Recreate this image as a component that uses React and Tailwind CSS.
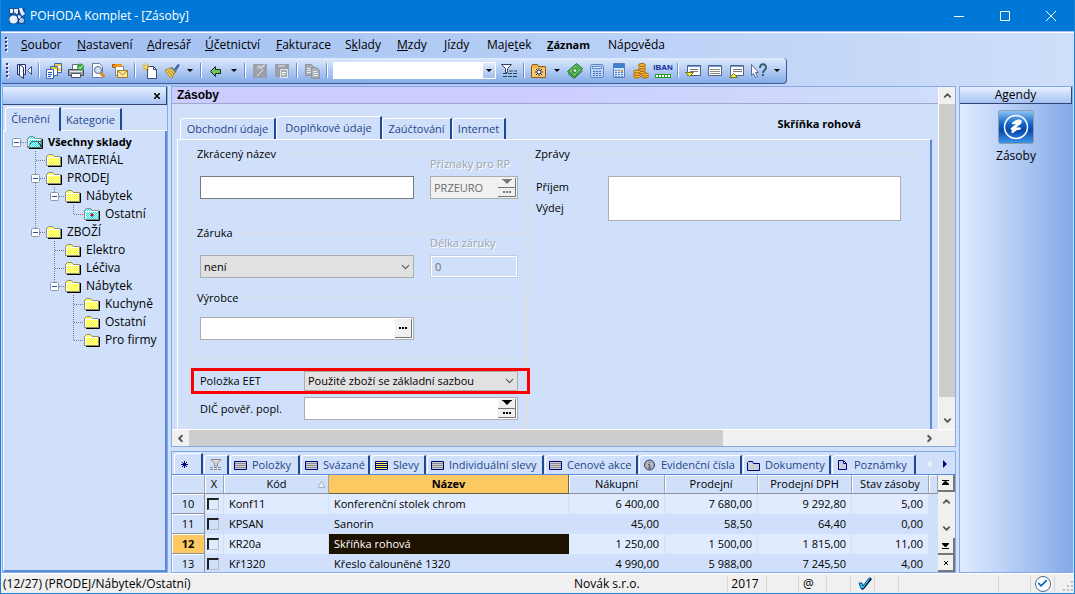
import clsx from 'clsx';
import { Check, ChevronDown, ChevronLeft, ChevronRight, ChevronUp } from 'lucide-react';

// accel is the index of the underlined accelerator letter
const menuItems = [
  { label: 'Soubor', accel: 0, width: 'w-14' },
  { label: 'Nastavení', accel: 0, width: 'w-[70px]' },
  { label: 'Adresář', accel: 0, width: 'w-[58px]' },
  { label: 'Účetnictví', accel: 0, width: 'w-[71px]' },
  { label: 'Fakturace', accel: 0, width: 'w-[69px]' },
  { label: 'Sklady', accel: 1, width: 'w-[52px]' },
  { label: 'Mzdy', accel: 0, width: 'w-[47px]' },
  { label: 'Jízdy', accel: 0, width: 'w-[43px]' },
  { label: 'Majetek', accel: 4, width: 'w-[60px]' },
  { label: 'Záznam', accel: 0, width: 'w-[61px]', bold: true },
  { label: 'Nápověda', accel: 3, width: 'w-[70px]' },
];

// guides: one entry for each tree column
const treeRows = [
  { label: 'Všechny sklady', guides: ['root'], icon: 'open', bold: true },
  { label: 'MATERIÁL', guides: ['none', 'tee'] },
  { label: 'PRODEJ', guides: ['none', 'teeBox'] },
  { label: 'Nábytek', guides: ['none', 'line', 'endBox'] },
  { label: 'Ostatní', guides: ['none', 'line', 'none', 'end'], icon: 'current' },
  { label: 'ZBOŽÍ', guides: ['none', 'endBox'] },
  { label: 'Elektro', guides: ['none', 'none', 'tee'] },
  { label: 'Léčiva', guides: ['none', 'none', 'tee'] },
  { label: 'Nábytek', guides: ['none', 'none', 'endBox'] },
  { label: 'Kuchyně', guides: ['none', 'none', 'none', 'tee'] },
  { label: 'Ostatní', guides: ['none', 'none', 'none', 'tee'] },
  { label: 'Pro firmy', guides: ['none', 'none', 'none', 'end'] },
];

const gridTabs = [
  { label: 'Položky', icon: 'list', width: 'w-[70px]' },
  { label: 'Svázané', icon: 'list', width: 'w-[69px]' },
  { label: 'Slevy', icon: 'listYellow', width: 'w-[55px]' },
  { label: 'Individuální slevy', icon: 'list', width: 'w-[117px]' },
  { label: 'Cenové akce', icon: 'list', width: 'w-[93px]' },
  { label: 'Evidenční čísla', icon: 'info', width: 'w-[103px]' },
  { label: 'Dokumenty', icon: 'folder', width: 'w-[88px]' },
  { label: 'Poznámky', icon: 'page', width: 'w-[84px]' },
];

const stock = [
  { no: 10, code: 'Konf11', name: 'Konferenční stolek chrom', buy: '6 400,00', sell: '7 680,00', vat: '9 292,80', qty: '5,00' },
  { no: 11, code: 'KPSAN', name: 'Sanorin', buy: '45,00', sell: '58,50', vat: '64,40', qty: '0,00' },
  { no: 12, code: 'KR20a', name: 'Skříňka rohová', buy: '1 250,00', sell: '1 500,00', vat: '1 815,00', qty: '11,00', selected: true },
  { no: 13, code: 'Kř1320', name: 'Křeslo čalouněné 1320', buy: '4 990,00', sell: '5 988,00', vat: '7 245,50', qty: '4,00' },
];

const toolIcons = {
  door: (
    <>
      <path d="M1.500 1.500h8v10h-8z" fill="#eef3ff" stroke="#22306e" />
      <path d="M3.500 1.500l4 3v11l-4-3z" fill="#fff" stroke="#22306e" />
      <path d="M15.500 3.500v8l-4-4z" fill="#fff" stroke="#3b5587" />
    </>
  ),
  windows: (
    <>
      <path d="M8.500.5h7v9h-7z" fill="#fff" stroke="#3566b8" />
      <path d="M9 1h6v2H9zM12 5h3v3h-3z" fill="#f4cf38" />
      <path d="M4.500 3.500h7v9h-7z" fill="#fffbe0" stroke="#3566b8" />
      <path d="M5 4h6v2H5z" fill="#f0c52c" />
      <path d="M.5 6.500h7v9h-7z" fill="#fff" stroke="#3566b8" />
      <path d="M2 9.500h4M2 11.500h4M2 13.500h3" stroke="#1d4fae" />
    </>
  ),
  printer: (
    <>
      <path d="M4.500 1.500h7v5h-7z" fill="#fff" stroke="#667" />
      <path d="M.5 6.500h15v6H.5z" fill="#9fa2a8" stroke="#4c4f58" />
      <path d="M2 8.500h12" stroke="#e6e8ec" />
      <path d="M3.500 10.500h9v4h-9z" fill="#fff" stroke="#556" />
      <circle cx="12.500" cy="4" r="3.500" fill="#3da648" />
      <path d="M10.500 4L12 5.500 14.500 2.500" fill="none" stroke="#fff" />
    </>
  ),
  preview: (
    <>
      <path d="M2.500.5h7l3 3v11h-10z" fill="#fff" stroke="#6d7fa4" />
      <circle cx="8" cy="7" r="3.500" fill="#cfe4fa" stroke="#53688f" />
      <path d="M10.500 10l4 4" stroke="#d78c1c" strokeWidth="3" />
    </>
  ),
  mail: (
    <>
      <path d="M.5 1.500h8v3h-8z" fill="#f0941f" stroke="#a75d0a" />
      <path d="M3.500 3.500h8v9h-8z" fill="#fff" stroke="#6d7fa4" />
      <path d="M3 1h7v3H3z" fill="#f0941f" />
      <path d="M5.500 7.500h10v7h-10z" fill="#fbe9a4" stroke="#a27b1c" />
      <path d="M5.500 7.500l5 4.500 5-4.500" fill="none" stroke="#a27b1c" />
    </>
  ),
  newRecord: (
    <>
      <path d="M5.500 3.500h6l3 3v9h-9z" fill="#fff" stroke="#3c4880" />
      <path d="M11.500 3.500v3h3" fill="none" stroke="#3c4880" />
      <path d="M4 0v8M0 4h8M1 1l6 6M7 1L1 7" stroke="#f0a800" />
      <path d="M3 3h2v2H3z" fill="#ffe76a" />
    </>
  ),
  brush: (
    <>
      <path d="M10 6l4-5 2 1-4 6z" fill="#3b62a8" />
      <path d="M8 4l5 5-2 1-5-5z" fill="#5f7699" />
      <path d="M1 7l6-2 4 4-3 6c-2 0-5-4-7-8z" fill="#e9c95a" stroke="#a8862c" />
      <path d="M4 8l4 5M6 7l4 4" stroke="#a8862c" />
    </>
  ),
  back: <path d="M2.500 8.500l5-5v3h5v4h-5v3z" fill="#74c45c" stroke="#152f24" />,
  save: (
    <>
      <path d="M1 1h14v14H1z" fill="#9a9fa9" />
      <path d="M4 2h8v5H4z" fill="#a8acb5" />
      <path d="M6 3l2 2 5-3" fill="none" stroke="#eef1f6" />
      <path d="M5 13l6-6" stroke="#e4e8ef" />
    </>
  ),
  saveAll: (
    <>
      <path d="M1 1h14v13H1z" fill="#9a9fa9" />
      <path d="M4 2h7v2H4z" fill="#c3c7ce" />
      <path d="M6.500 6.500h7v8h-7z" fill="#a7abb4" stroke="#dfe3ea" />
      <path d="M8 9.500h4M8 11.500h3" stroke="#fff" />
    </>
  ),
  copy: (
    <>
      <path d="M1.500 1.500h6l2 2v9h-8z" fill="#a9adb6" stroke="#8d929c" />
      <path d="M3 5.500h4M3 7.500h4M3 9.500h4" stroke="#e8ebf1" />
      <path d="M7.500 4.500h5l3 3v8h-8z" fill="#a9adb6" stroke="#8d929c" />
      <path d="M9 8.500h4M9 10.500h5M9 12.500h5" stroke="#e8ebf1" />
    </>
  ),
  filter: (
    <>
      <path d="M.5 1.500h10l-4 4v4h-2v-4z" fill="#fff" stroke="#35406a" />
      <path d="M2 10.500h14M2 13.500h14" stroke="#1d4a52" strokeDasharray="4 1" />
      <path d="M8 8h8" stroke="#1d4a52" strokeDasharray="4 1" />
    </>
  ),
  folderStar: (
    <>
      <path d="M.5 3.500l1-2h5l1 2h7v11H.5z" fill="#f1b24a" stroke="#8f5f14" />
      <path d="M1 5h13v9H1z" fill="#f7c96c" />
      <path d="M8 5v8M4 9h8M5 6l6 6M11 6l-6 6" stroke="#1c2a78" />
      <path d="M7 8h2v2H7z" fill="#fff" />
    </>
  ),
  money: (
    <>
      <path d="M.5 8.500l9-8 6 5-8 9z" fill="#4faf4c" stroke="#217a2b" />
      <path d="M1 10.500l6 5 9-8" fill="none" stroke="#217a2b" />
      <path d="M3 8.500l6-5.500M7 12l6-6" stroke="#8ad482" />
      <circle cx="8" cy="7.500" r="2" fill="#d9f2cf" stroke="#217a2b" />
    </>
  ),
  calcWide: (
    <>
      <rect x="1.500" y="1.500" width="13" height="13" rx="2" fill="#b9d2f6" stroke="#5c84c6" />
      <path d="M3.500 3.500h9v2h-9z" fill="#eaf3ff" stroke="#5c84c6" />
      <path d="M4 8.500h9M4 10.500h9M4 12.500h9" stroke="#406fbd" strokeDasharray="2 1" />
    </>
  ),
  calc: (
    <>
      <path d="M2.500.5h11v14h-11z" fill="#d3e4fa" stroke="#5a80bd" />
      <path d="M3 1h10v4H3z" fill="#3f7fcf" />
      <path d="M4 7.500h8M4 9.500h8M4 11.500h8M4 13.500h8" stroke="#5080c4" strokeDasharray="2 1" />
      <path d="M10 7h2v2h-2z" fill="#f0902a" />
    </>
  ),
  coins: (
    <g fill="#f7bc3e" stroke="#a8660a">
      <ellipse cx="9" cy="9.500" rx="3.500" ry="1.500" />
      <ellipse cx="9" cy="7" rx="3.500" ry="1.500" />
      <ellipse cx="9" cy="4.500" rx="3.500" ry="1.500" />
      <ellipse cx="9" cy="2" rx="3.500" ry="1.500" />
      <ellipse cx="4" cy="13.500" rx="3.500" ry="1.500" />
      <ellipse cx="4" cy="11" rx="3.500" ry="1.500" />
      <ellipse cx="4" cy="8.500" rx="3.500" ry="1.500" />
      <ellipse cx="12" cy="13.500" rx="3.500" ry="1.500" />
      <ellipse cx="12" cy="11.500" rx="3.500" ry="1.500" />
    </g>
  ),
  windowDown: (
    <>
      <path d="M2.500 2.500h13v10h-13z" fill="#fff" stroke="#53617f" />
      <path d="M3 3.500h12" stroke="#6b9be4" />
      <path d="M5 6.500h8M5 8.500h8" stroke="#777" />
      <path d="M.5 9.500h8l-4 4z" fill="#f7e93c" stroke="#77771a" />
    </>
  ),
  window: (
    <>
      <path d="M1.500 2.500h13v10h-13z" fill="#fff" stroke="#53617f" />
      <path d="M2 3.500h12" stroke="#6b9be4" />
      <path d="M3 6.500h10M3 8.500h10M3 10.500h10" stroke="#888" />
    </>
  ),
  windowUp: (
    <>
      <path d="M1.500 2.500h13v10h-13z" fill="#fff" stroke="#53617f" />
      <path d="M2 3.500h12" stroke="#6b9be4" />
      <path d="M4 6.500h9M4 8.500h9" stroke="#777" />
      <path d="M.5 14.500h8l-4-4z" fill="#f7e93c" stroke="#77771a" />
    </>
  ),
  help: (
    <>
      <path d="M.5 1.500l7 8h-3l2 4-2 1-2-4-2 2z" fill="#fff" stroke="#5a6b8c" />
      <path d="M9 5c0-5 6-5 6 0 0 2-3 2-3 5" fill="none" stroke="#335f73" strokeWidth="2" />
      <path d="M11 11h2v2h-2z" fill="#335f73" />
    </>
  ),
};

function ToolButton({ icon, label }) {
  return (
    <button aria-label={label} className="flex w-[22px] shrink-0 items-center justify-center">
      <svg width="16" height="16" viewBox="0 0 16 16">{toolIcons[icon]}</svg>
    </button>
  );
}

function ToolCaret() {
  return (
    <button aria-label="Další možnosti" className="flex w-3.5 shrink-0 items-center justify-center">
      <svg width="6" height="3"><path d="M0 0h6L3 3z" /></svg>
    </button>
  );
}

function ToolSep() {
  return <div className="mx-[3px] my-[5px] w-0.5 shrink-0 border-r border-l border-r-white border-l-[#6a8ccc]" />;
}

function Grip() {
  return (
    <svg width="3" height="15" className="mx-1 shrink-0 self-center">
      <path d="M2 1v14" stroke="#fff" strokeWidth="2" strokeDasharray="2 2" />
      <path d="M1 0v14" stroke="#27406f" strokeWidth="2" strokeDasharray="2 2" />
    </svg>
  );
}

function TitleBar() {
  return (
    <div className="flex h-8 shrink-0 items-center border-b border-[#a9c4e6] bg-[#0078d7] text-white">
      <svg width="16" height="16" viewBox="0 0 16 16" className="ml-2">
        <path d="M0 0h16v16H0z" fill="#15549f" />
        <g fill="#e8efff">
          <circle cx="4.500" cy="11.500" r="4" />
          <path d="M1 1h3v4H1zM5 1h4v5H5zM10 0h3l1 3 2 3-3 2-2-4zM9 7l3 1-1 3-2-1z" />
          <circle cx="12.500" cy="12.500" r="2.500" fill="#b9c8ea" />
        </g>
        <path d="M4 4l3 2M10 3l-1 3M8 9l3 3" stroke="#1a2a78" />
      </svg>
      <span className="ml-[5px] flex-1">POHODA Komplet - [Zásoby]</span>
      <button aria-label="Minimalizovat" className="flex h-full w-[46px] items-center justify-center">
        <svg width="10" height="10"><path d="M0 5.500h10" stroke="#fff" /></svg>
      </button>
      <button aria-label="Maximalizovat" className="flex h-full w-[46px] items-center justify-center">
        <svg width="10" height="10"><path d="M.5.5h9v9h-9z" fill="none" stroke="#fff" /></svg>
      </button>
      <button aria-label="Zavřít" className="flex h-full w-[46px] items-center justify-center">
        <svg width="10" height="10"><path d="M0 0l10 10M10 0L0 10" stroke="#fff" /></svg>
      </button>
    </div>
  );
}

function MenuBar() {
  return (
    <nav className="flex h-[25px] shrink-0 items-center pb-0.5">
      <Grip />
      <div className="ml-[9px] flex">
        {menuItems.map(({ label, accel, width, bold }) => (
          <button key={label} className={clsx(width, 'text-left whitespace-nowrap', bold && 'text-[11px] font-bold')}>
            {label.slice(0, accel)}
            <span className="underline">{label[accel]}</span>
            {label.slice(accel + 1)}
          </button>
        ))}
      </div>
    </nav>
  );
}

function Toolbar() {
  return (
    <div className="ml-px flex h-[26px] shrink-0 self-start rounded-r-sm border-r border-b border-[#3d5a92] bg-linear-to-b from-[#dfeafd] to-[#86abe8] pr-0.5">
      <Grip />
      <ToolButton icon="door" label="Konec" />
      <ToolSep />
      <ToolButton icon="windows" label="Agendy" />
      <ToolButton icon="printer" label="Tisk" />
      <ToolButton icon="preview" label="Náhled" />
      <ToolButton icon="mail" label="Odeslat" />
      <ToolSep />
      <ToolButton icon="newRecord" label="Nový záznam" />
      <ToolButton icon="brush" label="Vymazat" />
      <ToolCaret />
      <ToolSep />
      <ToolButton icon="back" label="Zpět" />
      <ToolCaret />
      <ToolSep />
      <ToolButton icon="save" label="Uložit" />
      <ToolButton icon="saveAll" label="Uložit vše" />
      <ToolSep />
      <ToolButton icon="copy" label="Kopírovat" />
      <ToolSep />
      <div className="mx-0.5 my-1 flex w-[163px] border border-white bg-white">
        <input aria-label="Hledat" className="min-w-0 flex-1 bg-white px-1 outline-none" />
        <button aria-label="Rozbalit" className="flex w-3 items-center justify-center bg-linear-to-b from-[#dfeafd] to-[#a3c0f0]">
          <svg width="6" height="3"><path d="M0 0h6L3 3z" /></svg>
        </button>
      </div>
      <ToolButton icon="filter" label="Filtr" />
      <ToolSep />
      <ToolButton icon="folderStar" label="Oblíbené" />
      <ToolCaret />
      <ToolButton icon="money" label="Pokladna" />
      <ToolButton icon="calcWide" label="Kalkulačka" />
      <ToolButton icon="calc" label="Výpočet" />
      <ToolButton icon="coins" label="Měny" />
      <button className="flex w-[22px] shrink-0 flex-col items-center justify-center font-['Liberation_Sans',sans-serif] text-[8px] leading-[8px] font-bold text-[#10309c]">
        IBAN
        <svg width="16" height="4" className="mt-0.5">
          <path d="M0 0h16v4H0z" fill="#2a9a1d" />
          <path d="M1 2h14" stroke="#fff" strokeWidth="2" strokeDasharray="2 1" />
        </svg>
      </button>
      <ToolSep />
      <ToolButton icon="windowDown" label="Okno dolů" />
      <ToolButton icon="window" label="Okno" />
      <ToolButton icon="windowUp" label="Okno nahoru" />
      <ToolButton icon="help" label="Nápověda" />
      <ToolCaret />
    </div>
  );
}

function TreeGuide({ type }) {
  const box = type === 'root' || type.endsWith('Box');
  const down = type === 'line' || type.startsWith('tee');
  return (
    <svg width="19" height="18" className="shrink-0">
      {type !== 'none' && type !== 'root' && (
        <path d={down ? 'M9.500 0v18' : 'M9.500 0v10'} stroke="#6f7d93" strokeDasharray="1 1" />
      )}
      {type !== 'none' && type !== 'line' && <path d="M10 9.500h9" stroke="#6f7d93" strokeDasharray="1 1" />}
      {box && (
        <>
          <rect x="5.500" y="5.500" width="8" height="8" rx="1" fill="#fff" stroke="#8b97a8" />
          <path d="M7 9.500h5" stroke="#2f4ea0" />
        </>
      )}
    </svg>
  );
}

function FolderIcon({ kind }) {
  const fill = kind ? 'url(#ditherCyan)' : 'url(#ditherYellow)';
  return (
    <svg width="16" height="14" viewBox="0 0 16 14" className="ml-px shrink-0">
      <path d="M2 13.500h13.500V4" fill="none" stroke="#000" />
      <path d="M.5 12.500v-9l2-2h4l2 2h6v9z" fill={fill} stroke="#8a8a80" />
      <path d="M1.500 4v8M2 4.500h12" stroke="#fff" />
      {kind === 'open' && <path d="M4.500 6.500h10l-1.500 6H1.500z" fill={fill} stroke="#4a6a70" />}
      {kind === 'open' && <path d="M11 7l4 5" stroke="#000" />}
      {kind === 'current' && <path d="M8 6l2 2-2 2-2-2z" fill="#e00000" />}
    </svg>
  );
}

// Checkered fills shared by all the folder icons
function DitherPatterns() {
  return (
    <svg width="0" height="0" className="absolute">
      <defs>
        <pattern id="ditherYellow" width="2" height="2" patternUnits="userSpaceOnUse">
          <path d="M0 0h2v2H0z" fill="#ffffd8" />
          <path d="M0 0h1v1H0zM1 1h1v1H1z" fill="#ffff00" />
        </pattern>
        <pattern id="ditherCyan" width="2" height="2" patternUnits="userSpaceOnUse">
          <path d="M0 0h2v2H0z" fill="#e4ffff" />
          <path d="M0 0h1v1H0zM1 1h1v1H1z" fill="#00e8f0" />
        </pattern>
      </defs>
    </svg>
  );
}

function LeftPanel() {
  return (
    <aside className="flex w-[166px] shrink-0 flex-col border border-[#84aae8] bg-[#d0e0fa]">
      <div className="flex h-[18px] shrink-0 items-center justify-end border-r border-b border-[#2f4672] bg-linear-to-b from-[#e6effe] to-[#a6c2f2] pr-1.5">
        <button aria-label="Zavřít panel">
          <svg width="6" height="6"><path d="M0 0l6 6M6 0L0 6" stroke="#000" strokeWidth="1.500" /></svg>
        </button>
      </div>
      <div className="flex h-[26px] shrink-0 items-end border-b border-white pl-0.5 text-[11px] text-[#24468c]">
        <button className="-mb-px h-6 w-14 rounded-tl border-t border-r-2 border-l border-t-white border-r-[#1d4a94] border-l-white bg-[#d0e0fa] pr-1 pb-0.5">
          Členění
        </button>
        <button className="h-[22px] w-[61px] rounded-tl border-t border-r-2 border-t-white border-r-[#1d4a94]">
          Kategorie
        </button>
      </div>
      <div className="flex-1 border-r-2 border-b-2 border-l border-r-[#5b8ad6] border-b-[#5b8ad6] border-l-white pt-0.5 pl-[3px]">
        <DitherPatterns />
        {treeRows.map((row, i) => (
          <div key={i} className="flex h-[18px] items-center">
            {row.guides.map((type, j) => <TreeGuide key={j} type={type} />)}
            <FolderIcon kind={row.icon} />
            <span className={clsx('ml-[5px] whitespace-nowrap', row.bold && 'text-[11px] font-bold')}>{row.label}</span>
          </div>
        ))}
      </div>
    </aside>
  );
}

function Fieldset({ legend, className, children }) {
  return (
    <fieldset className={clsx('border-x border-t border-[#dadcde]', className)}>
      <legend className="ml-1 h-4 px-[3px] leading-4">{legend}</legend>
      {children}
    </fieldset>
  );
}

function SpinButtons({ disabled }) {
  const color = disabled ? '#777' : '#000';
  return (
    <div className="flex w-[18px] shrink-0 flex-col">
      <button disabled={disabled} aria-label="Vybrat" className="flex flex-1 items-center justify-center border-r border-b border-[#777] bg-[#f0f0f0]">
        <svg width="10" height="6"><path d="M0 0h10v1H0zM1 1h8L5 5z" fill={color} /></svg>
      </button>
      <button disabled={disabled} aria-label="Podrobnosti" className="flex flex-1 items-center justify-center border-r border-b border-[#777] bg-[#f0f0f0]">
        <svg width="8" height="2"><path d="M0 0h2v2H0zM3 0h2v2H3zM6 0h2v2H6z" fill={color} /></svg>
      </button>
    </div>
  );
}

function DropDown({ id, label, value, className }) {
  return (
    <div className={clsx('relative', className)}>
      <select id={id} aria-label={label} defaultValue={value} className="h-full w-full appearance-none border border-[#adadad] bg-[#e1e1e1] px-[3px] outline-none">
        <option>{value}</option>
      </select>
      <ChevronDown size={13} strokeWidth={2} className="pointer-events-none absolute top-1/2 right-0.5 -translate-y-1/2 text-[#555]" />
    </div>
  );
}

function FormTab({ active, width, children }) {
  return (
    <button
      className={clsx(
        width,
        'shrink-0 rounded-tl border-t border-r-2 border-l border-t-white border-r-[#1d4a94] border-l-white bg-[#d0e0fa] whitespace-nowrap text-[#24468c]',
        active ? '-mb-px h-6 pb-0.5' : 'h-[21px]'
      )}
    >
      {children}
    </button>
  );
}

function DetailForm() {
  return (
    <div className="flex min-w-0 flex-1 flex-col overflow-hidden text-[11px]">
      <h1 className="flex h-[17px] shrink-0 items-center border-b border-[#9fa6cf] bg-linear-to-r from-[#ccccff] from-40% to-[#d0defa] pl-[5px] font-['Liberation_Sans',sans-serif] text-[12px] font-bold">
        Zásoby
      </h1>
      <div className="flex h-[35px] shrink-0 items-end pl-2">
        <FormTab width="w-24">Obchodní údaje</FormTab>
        <FormTab width="w-[106px]" active>Doplňkové údaje</FormTab>
        <FormTab width="w-[70px]">Zaúčtování</FormTab>
        <FormTab width="w-[54px]">Internet</FormTab>
        <span className="mr-[77px] mb-[7px] ml-auto font-bold">Skříňka rohová</span>
      </div>
      <div className="mr-1.5 ml-[5px] flex min-h-0 flex-1 overflow-hidden border-t border-r-2 border-l border-t-white border-r-[#5b8ad6] border-l-white pt-1.5 pr-3.5 pl-[11px]">
        <div className="w-[338px] shrink-0">
          <Fieldset legend="Zkrácený název" className="h-[87px]">
            <div className="-mt-1.5 flex items-end gap-4 px-2.5">
              <input aria-label="Zkrácený název" className="h-[23px] w-[214px] border border-[#7a7a7a] bg-white px-1 outline-none" />
              <div className="w-[88px]">
                <label htmlFor="flags" className="block leading-4 text-[#a0a4ac] [text-shadow:1px_1px_0_#fff]">Příznaky pro RP</label>
                <div className="mt-1 flex h-[23px] border border-[#adadad] bg-[#f0f0f0] p-px">
                  <input id="flags" disabled defaultValue="PRZEURO" className="min-w-0 flex-1 px-0.5 text-[#6d6d6d]" />
                  <SpinButtons disabled />
                </div>
              </div>
            </div>
          </Fieldset>
          <Fieldset legend="Záruka" className="-mt-2 h-[73px]">
            <div className="-mt-1.5 flex items-end gap-4 px-2.5">
              <DropDown label="Záruka" value="není" className="h-[23px] w-[214px]" />
              <div className="w-[88px]">
                <label htmlFor="length" className="block leading-4 text-[#a0a4ac] [text-shadow:1px_1px_0_#fff]">Délka záruky</label>
                <input id="length" disabled defaultValue="0" className="mt-1 block h-[23px] w-full border-2 border-white bg-transparent px-[3px] text-[#6d6d6d] outline -outline-offset-1 outline-[#c4cddd]" />
              </div>
            </div>
          </Fieldset>
          <Fieldset legend="Výrobce" className="-mt-2 h-[67px]">
            <div className="px-2.5 pt-[11px]">
              <div className="flex h-[23px] w-[214px] border border-[#adadad] bg-white p-px">
                <input aria-label="Výrobce" className="min-w-0 flex-1 px-1 outline-none" />
                <button aria-label="Vybrat výrobce" className="flex w-[17px] items-center justify-center border-r border-b border-[#777] bg-[#f0f0f0]">
                  <svg width="8" height="2"><path d="M0 0h2v2H0zM3 0h2v2H3zM6 0h2v2H6z" /></svg>
                </button>
              </div>
            </div>
          </Fieldset>
          <div className="h-24 border-x border-t border-[#dadcde] px-px pt-2.5">
            <div className="relative -mr-[5px] flex h-[26px] items-center border-[3px] border-[#fe0000] pr-[9px] pl-1.5">
              <label htmlFor="eet" className="w-[104px]">Položka EET</label>
              <DropDown id="eet" value="Použité zboží se základní sazbou" className="h-5 flex-1" />
            </div>
            <div className="mt-[3px] flex items-center pr-[7px] pl-[9px]">
              <label htmlFor="vatId" className="w-[104px]">DIČ pověř. popl.</label>
              <div className="flex h-[23px] flex-1 border border-[#adadad] bg-white p-px">
                <input id="vatId" className="min-w-0 flex-1 px-1 outline-none" />
                <SpinButtons />
              </div>
            </div>
          </div>
        </div>
        <Fieldset legend="Zprávy" className="h-[400px] flex-1">
          <div className="flex pt-3.5 pr-3.5 pl-2">
            <div className="w-[72px] leading-[21px]">
              <label htmlFor="messages" className="block">Příjem</label>
              <span>Výdej</span>
            </div>
            <textarea id="messages" className="h-[45px] flex-1 resize-none border border-[#adadad] bg-white outline-none" />
          </div>
        </Fieldset>
      </div>
    </div>
  );
}

function TabIcon({ icon }) {
  if (icon === 'info') {
    return (
      <svg width="13" height="12" viewBox="0 0 13 12" className="shrink-0">
        <circle cx="6.500" cy="6" r="5" fill="#b4b4b4" stroke="#22307c" />
        <path d="M6.500 3v1M5 5.500h1.500V9M5 9h3" fill="none" stroke="#555" />
      </svg>
    );
  }
  if (icon === 'folder') {
    return (
      <svg width="13" height="11" className="shrink-0">
        <path d="M.5 10.500v-8l1-1h4l1 2h6v7z" fill="#c9ced8" stroke="#000080" />
      </svg>
    );
  }
  if (icon === 'page') {
    return (
      <svg width="13" height="12" className="shrink-0">
        <path d="M2.500 1.500h5l3 3v6h-8zM7.500 1.500v3h3" fill="#c9ced8" stroke="#000080" />
      </svg>
    );
  }
  const yellow = icon === 'listYellow';
  return (
    <svg width="13" height="9" className="shrink-0">
      <path d="M.5.5h12v8H.5z" fill={yellow ? '#ffff4a' : '#cfcfcf'} stroke="#000080" />
      <path d="M1 2.500h11M1 4.500h11M1 6.500h11" stroke={yellow ? '#000080' : '#8a8a8a'} />
    </svg>
  );
}

const gridTab = 'mr-px flex h-[19px] shrink-0 items-center rounded-tl border-t border-r-2 border-l border-t-white border-r-[#1d4a94] border-l-white whitespace-nowrap';

const headCell = 'border-r border-b border-r-[#a0a4ac] border-b-[#8d919b] p-0 font-normal shadow-[inset_1px_1px_0_#fff]';

function StockTable() {
  return (
    <table className="w-full table-fixed border-separate border-spacing-0 text-[11px] whitespace-nowrap">
      <colgroup>
        <col className="w-[33px]" />
        <col className="w-[19px]" />
        <col className="w-[105px]" />
        <col className="w-[240px]" />
        <col className="w-24" />
        <col className="w-[93px]" />
        <col className="w-[94px]" />
        <col className="w-[77px]" />
        <col />
      </colgroup>
      <thead>
        <tr className="h-[19px]">
          <th className={headCell} />
          <th className={headCell}>X</th>
          <th className={headCell}>
            <span className="flex items-center">
              <span className="flex-1">Kód</span>
              <svg width="9" height="8" className="mr-0.5 -ml-3"><path d="M4.500 1L8 7.500H1z" fill="#e8eefa" stroke="#a9b3c4" /></svg>
            </span>
          </th>
          <th className="border-r border-b border-[#6d6248] bg-[#fbc862] p-0 font-bold">Název</th>
          <th className={headCell}>Nákupní</th>
          <th className={headCell}>Prodejní</th>
          <th className={headCell}>Prodejní DPH</th>
          <th className={headCell}>Stav zásoby</th>
          <th className={headCell} />
        </tr>
      </thead>
      <tbody>
        {stock.map((item, i) => {
          const cell = clsx('border-r border-[#d0e0fa]', i % 2 === 0 && 'bg-[#e0ebff]');
          return (
            <tr key={item.no} className="h-5">
              <th
                className={clsx(
                  'border-r border-b border-[#8d919b] text-center shadow-[inset_1px_1px_0_#fff]',
                  item.selected ? 'bg-[#fbc862] font-bold' : 'font-normal'
                )}
              >
                {item.no}
              </th>
              <td className={cell}>
                <input
                  type="checkbox"
                  aria-label={item.name}
                  className="ml-0.5 block size-3 appearance-none border-t-2 border-r border-b border-l-2 border-t-[#222] border-r-[#b8bcc4] border-b-[#b8bcc4] border-l-[#222]"
                />
              </td>
              <td className={clsx(cell, 'pl-[5px]')}>{item.code}</td>
              <td className={clsx('pl-[5px]', item.selected ? 'bg-[#1e1200] text-white' : cell)}>{item.name}</td>
              <td className={clsx(cell, 'pr-[5px] text-right')}>{item.buy}</td>
              <td className={clsx(cell, 'pr-[5px] text-right')}>{item.sell}</td>
              <td className={clsx(cell, 'pr-[5px] text-right')}>{item.vat}</td>
              <td className={clsx(cell, 'pr-[5px] text-right')}>{item.qty}</td>
              <td />
            </tr>
          );
        })}
      </tbody>
    </table>
  );
}

const raised = 'flex h-[17px] shrink-0 items-center justify-center border-r-2 border-b-2 border-[#777] bg-[#f0f0f0]';

function GridPanel() {
  return (
    <section className="mt-1 flex h-[122px] shrink-0 flex-col overflow-hidden border border-[#84aae8] bg-[#d0e0fa]">
      <div className="flex h-[23px] shrink-0 items-end border-b border-[#5b8ad6] pl-0.5 text-[11px] text-[#24468c]">
        <button aria-label="Tabulka" className="mr-px flex h-[21px] w-[29px] items-center rounded-tl border-t border-r-2 border-l border-t-white border-r-[#1d4a94] border-l-white pl-1.5">
          <svg width="7" height="7">
            <path d="M3.500 0v7M0 3.500h7M1 1l5 5M6 1L1 6" stroke="#000080" />
          </svg>
        </button>
        <button aria-label="Filtr" className={clsx(gridTab, 'w-[25px] justify-center')}>
          <svg width="12" height="12">
            <path d="M1 .5h10L7.500 4v3h-3V4z" fill="#ddd" stroke="#888" />
            <path d="M0 8.500h12M0 10.500h12" stroke="#888" strokeDasharray="3 1" />
          </svg>
        </button>
        {gridTabs.map(({ label, icon, width }) => (
          <button key={label} className={clsx(gridTab, width, 'pl-[3px]')}>
            <TabIcon icon={icon} />
            <span className="ml-[5px]">{label}</span>
          </button>
        ))}
        <div className="mr-2 mb-1.5 ml-auto flex gap-3">
          <button aria-label="Předchozí záložky"><svg width="4" height="8"><path d="M4 0v8L0 4z" fill="#eef3fd" /></svg></button>
          <button aria-label="Další záložky"><svg width="4" height="8"><path d="M0 0v8l4-4z" fill="#000080" /></svg></button>
        </div>
      </div>
      <div className="flex min-h-0 flex-1">
        <div className="min-w-0 flex-1 overflow-hidden">
          <StockTable />
        </div>
        <div className="flex w-[17px] shrink-0 flex-col bg-[#f0f0f0]">
          <button aria-label="Na začátek" className={raised}>
            <svg width="7" height="6"><path d="M0 0h7v1H0zM3 1h1l3 3v1H0V4z" /></svg>
          </button>
          <div className="flex flex-1 flex-col items-center justify-between py-1 text-[#555]">
            <ChevronUp size={11} strokeWidth={4} />
            <ChevronDown size={11} strokeWidth={4} />
          </div>
          <button aria-label="Na konec" className={raised}>
            <svg width="7" height="6"><path d="M0 5h7v1H0zM0 0h7v1L4 4H3L0 1z" /></svg>
          </button>
          <button aria-label="Zrušit" className={raised}>
            <svg width="4" height="4"><path d="M0 0l4 4M4 0L0 4" stroke="#000" /></svg>
          </button>
        </div>
      </div>
    </section>
  );
}

function CenterPanel() {
  return (
    <main className="flex min-w-0 flex-1 flex-col">
      <section className="flex min-h-0 flex-1 flex-col overflow-hidden border border-[#84aae8] bg-[#d0e0fa]">
        <div className="flex min-h-0 flex-1">
          <DetailForm />
          <div className="flex w-[17px] shrink-0 flex-col items-center border-l border-white bg-[#f0f0f0] text-[#555]">
            <ChevronUp size={11} strokeWidth={4} className="my-[3px]" />
            <div className="w-full flex-1 bg-[#cdcdcd]" />
            <ChevronDown size={11} strokeWidth={4} className="mt-[18px] mb-[3px]" />
          </div>
        </div>
        <div className="flex h-[17px] shrink-0 items-center border-t border-white bg-[#f0f0f0] pr-[17px] text-[#555]">
          <ChevronLeft size={11} strokeWidth={4} className="mx-[3px]" />
          <div className="h-full flex-1">
            <div className="h-full w-[73%] bg-[#cdcdcd]" />
          </div>
          <ChevronRight size={11} strokeWidth={4} className="mx-[3px]" />
        </div>
      </section>
      <GridPanel />
    </main>
  );
}

function AgendaPanel() {
  return (
    <aside className="flex w-[114px] shrink-0 flex-col border border-[#84aae8] bg-linear-to-r from-[#e0ebff] to-[#84aae8]">
      <h2 className="flex h-[17px] shrink-0 items-center justify-center border-r border-b border-[#2f4672] bg-linear-to-b from-[#e6effe] to-[#a6c2f2]">
        Agendy
      </h2>
      <button className="flex flex-col items-center pt-1.5">
        <svg width="36" height="34" viewBox="0 0 36 34">
          <defs>
            <linearGradient id="tile" x1="0" y1="0" x2="0" y2="1">
              <stop offset="0" stopColor="#8fc6f7" />
              <stop offset="0.4" stopColor="#1467c8" />
              <stop offset="0.6" stopColor="#0648a8" />
              <stop offset="1" stopColor="#3f98ee" />
            </linearGradient>
          </defs>
          <rect x=".5" y=".5" width="35" height="33" rx="2" fill="url(#tile)" stroke="#8e9cab" />
          <circle cx="18" cy="17" r="11.500" fill="none" stroke="#fff" strokeWidth="1.500" />
          <path d="M15 12c2-2 5-3 8-2 2 2 0 4-3 6l-2 2c2-1 4-1 5 0 0 2-2 2-4 2l-4 3c-2 0-2-1-1-3-1 0-2-1-1-2l5-4c-2 0-3 1-4 0 0-1 0-2 1-2z" fill="#fff" />
        </svg>
        <span className="mt-1">Zásoby</span>
      </button>
    </aside>
  );
}

function StatusBar() {
  const cell = 'flex h-4 shrink-0 items-center justify-center border-l border-[#d7d7d7]';
  return (
    <footer className="flex h-5 shrink-0 items-center border-t border-white bg-[#f0f0f0]">
      <span className="flex-1 pl-0.5">(12/27) (PRODEJ/Nábytek/Ostatní)</span>
      <span className="w-[153px] shrink-0">Novák s.r.o.</span>
      <span className={clsx(cell, 'w-[39px] pr-1')}>2017</span>
      <span className={clsx(cell, 'w-8')} />
      <span className={clsx(cell, 'w-7 pr-2')}>@</span>
      <span className={clsx(cell, 'w-6')} />
      <span className={clsx(cell, 'w-6 pl-1')}>
        <svg width="14" height="13" viewBox="0 0 14 13">
          <path d="M2 7l2 0 1 2 7-8 2 1-8 10-2 1z" fill="#000" />
          <path d="M1 6h3l1 3 6-8h2L5.500 11.500H3z" fill="#22d8e8" stroke="#000080" strokeWidth=".7" />
        </svg>
      </span>
      <span className={clsx(cell, 'w-6')} />
      <span className={clsx(cell, 'w-[100px]')} />
      <span className={clsx(cell, 'w-8')} />
      <span className={clsx(cell, 'w-6')}>
        <span className="flex size-4 shrink-0 items-center justify-center rounded-full border border-[#4a6a90] bg-white">
          <Check size={11} strokeWidth={4} className="text-[#1b6fc4]" />
        </span>
      </span>
      <span className={clsx(cell, 'w-5 items-end justify-end')}>
        <svg width="11" height="11">
          <path d="M8 0h2v2H8zM8 4h2v2H8zM8 8h2v2H8zM4 4h2v2H4zM4 8h2v2H4zM0 8h2v2H0z" fill="#bfbfbf" />
        </svg>
      </span>
    </footer>
  );
}

export default function App() {
  return (
    <div className="flex h-screen flex-col overflow-hidden border-x border-b border-[#1883d7] bg-[#d0e0fa] font-['Open_Sans','Noto_Sans',sans-serif] text-[12px] leading-4 text-black">
      <TitleBar />
      <div className="flex shrink-0 flex-col border-t border-white bg-linear-to-r from-[#9ebdf0] to-[#cfdffa] pb-0.5">
        <MenuBar />
        <Toolbar />
      </div>
      <div className="flex min-h-0 flex-1 gap-[3px] px-px">
        <LeftPanel />
        <CenterPanel />
        <AgendaPanel />
      </div>
      <StatusBar />
    </div>
  );
}
